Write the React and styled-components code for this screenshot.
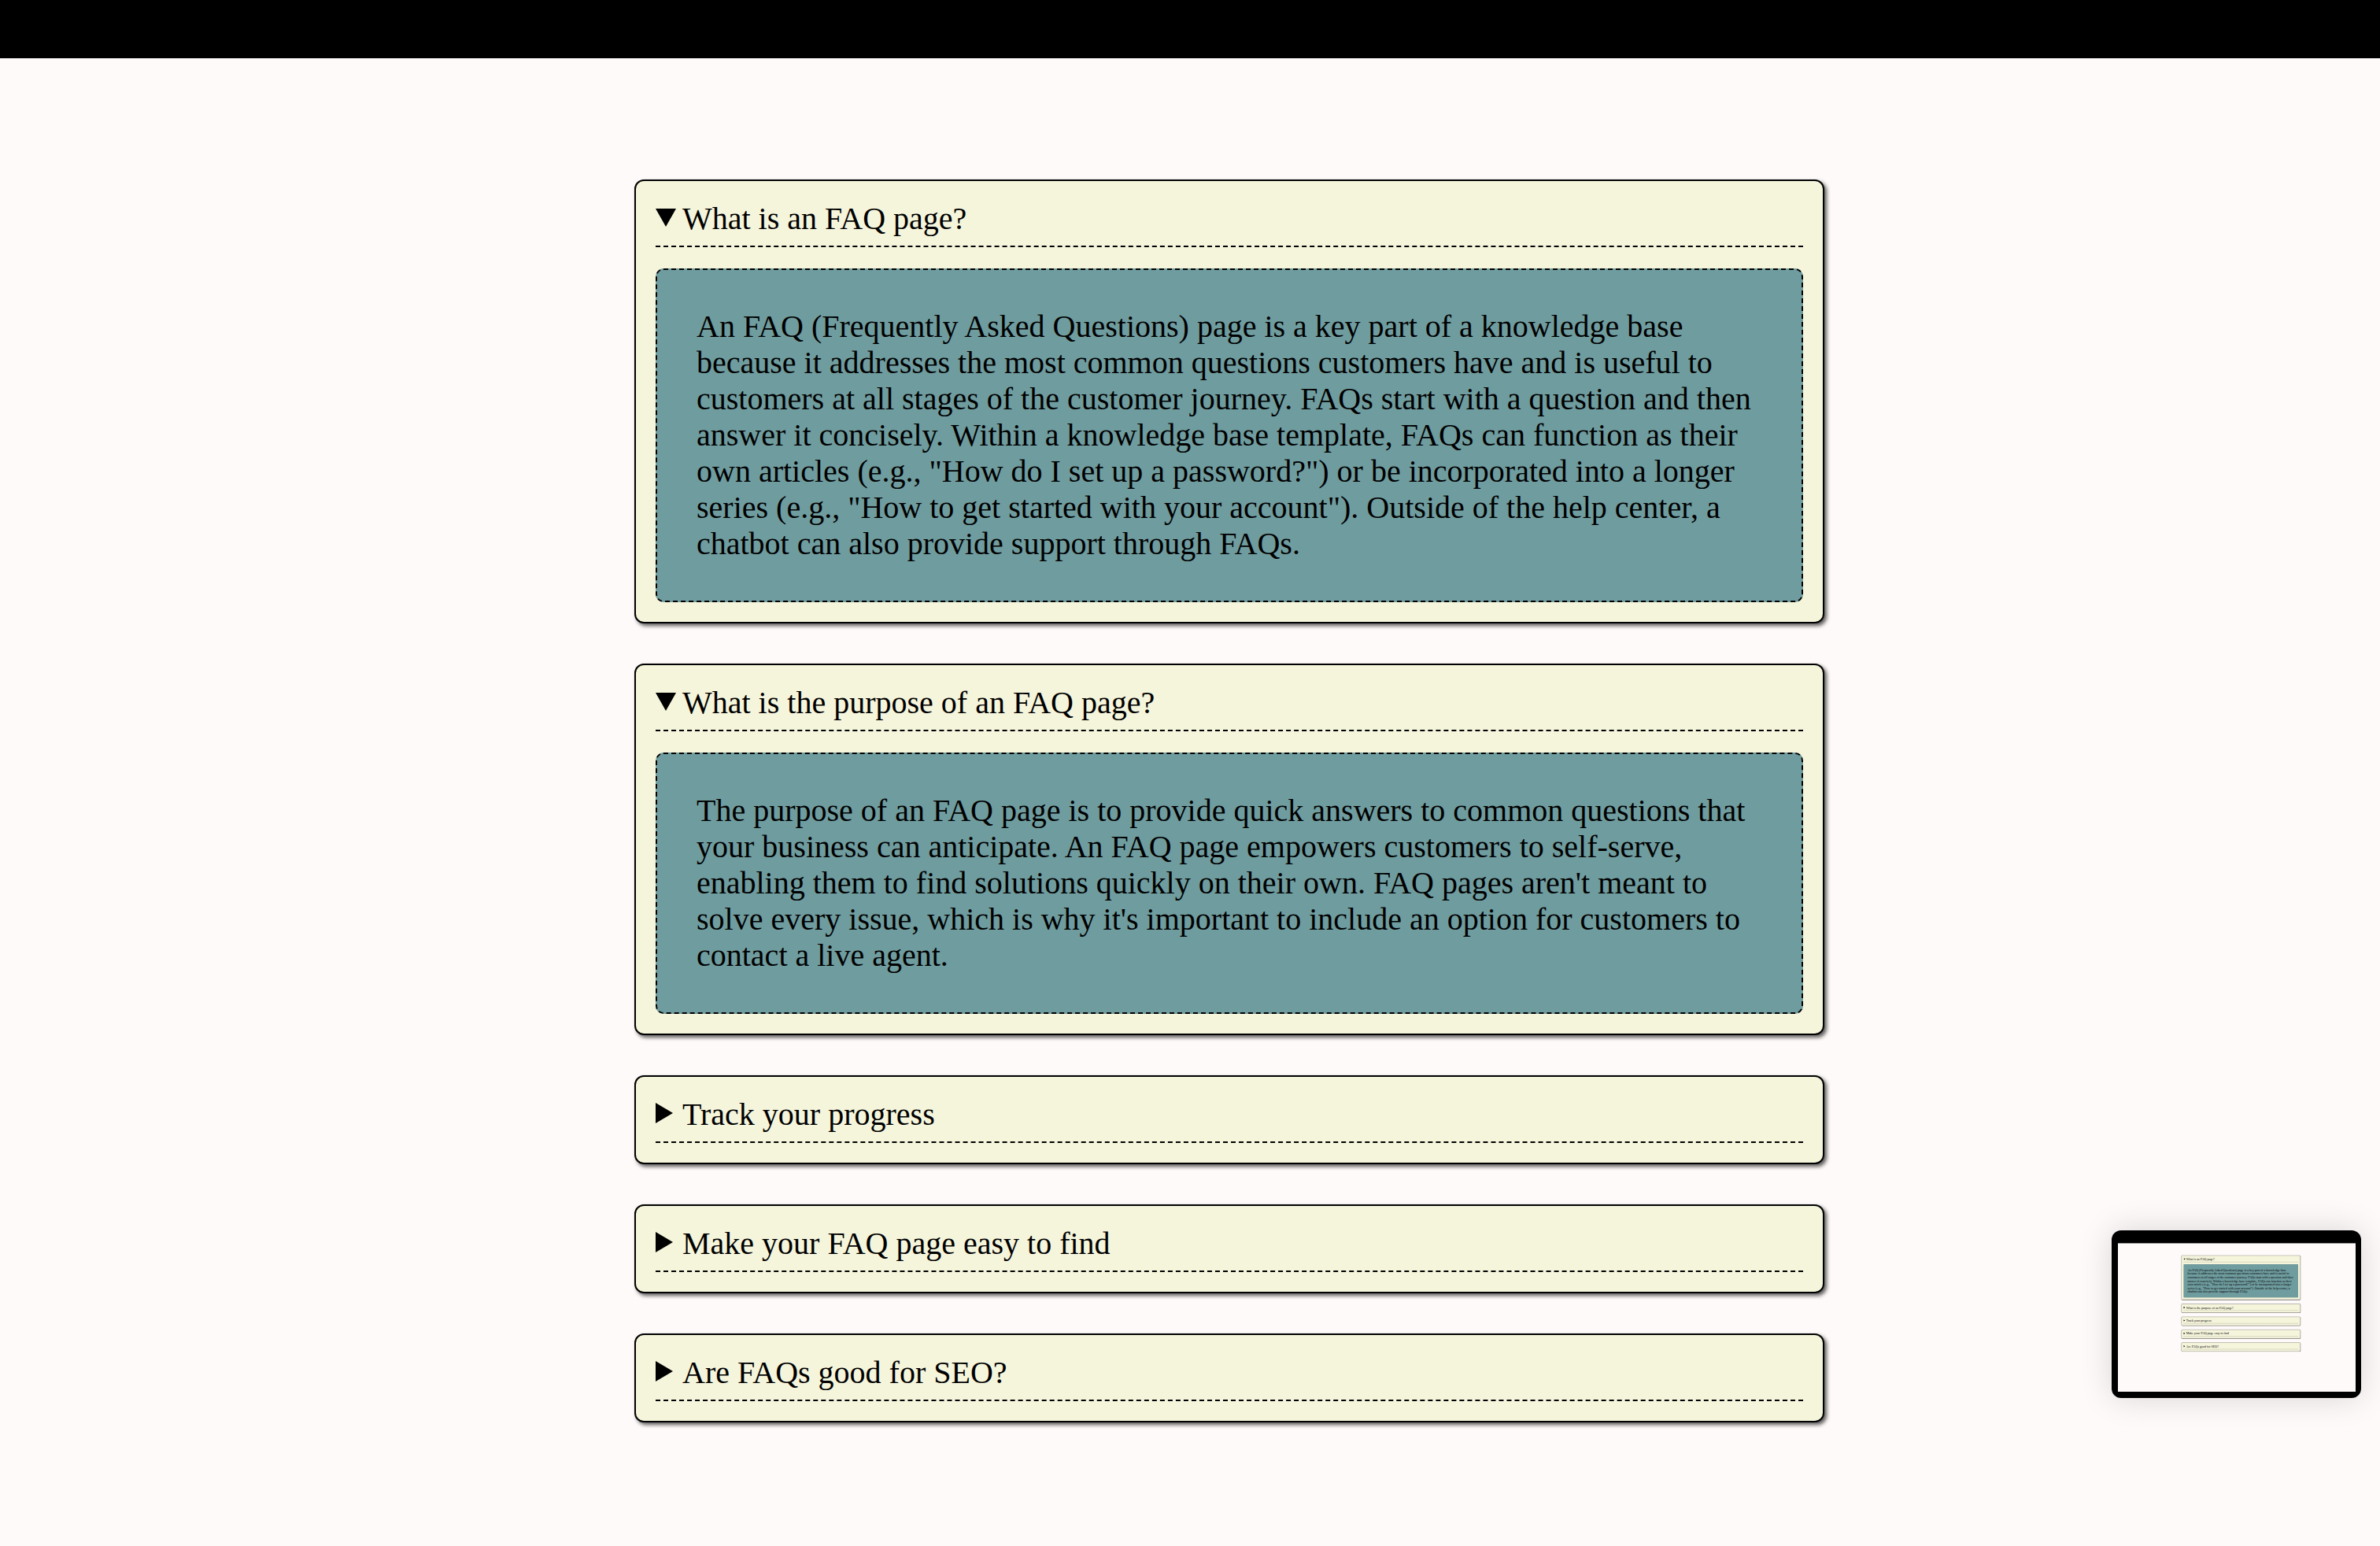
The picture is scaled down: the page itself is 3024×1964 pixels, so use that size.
import styled, { createGlobalStyle } from "styled-components";

const faqs = [
  {
    question: "What is an FAQ page?",
    answer:
      'An FAQ (Frequently Asked Questions) page is a key part of a knowledge base because it addresses the most common questions customers have and is useful to customers at all stages of the customer journey. FAQs start with a question and then answer it concisely. Within a knowledge base template, FAQs can function as their own articles (e.g., "How do I set up a password?") or be incorporated into a longer series (e.g., "How to get started with your account"). Outside of the help center, a chatbot can also provide support through FAQs.',
  },
  {
    question: "What is the purpose of an FAQ page?",
    answer:
      "The purpose of an FAQ page is to provide quick answers to common questions that your business can anticipate. An FAQ page empowers customers to self-serve, enabling them to find solutions quickly on their own. FAQ pages aren't meant to solve every issue, which is why it's important to include an option for customers to contact a live agent.",
  },
  { question: "Track your progress", answer: "" },
  { question: "Make your FAQ page easy to find", answer: "" },
  { question: "Are FAQs good for SEO?", answer: "" },
];

const GlobalStyle = createGlobalStyle`
  html, body {
    margin: 0;
    padding: 0;
    background: #fffafa;
  }
  body {
    font-family: "Liberation Serif", "Times New Roman", serif;
    color: #000;
  }
`;

// disclosure triangle, drawn like the browser's own marker
const Marker = ({ open }) =>
  open ? (
    <MarkerIcon $open width="26" height="23" viewBox="0 0 26 23">
      <polygon points="0,0 26,0 13,23" fill="#000" />
    </MarkerIcon>
  ) : (
    <MarkerIcon width="22" height="26" viewBox="0 0 22 26">
      <polygon points="0,0 22,13 0,26" fill="#000" />
    </MarkerIcon>
  );

const Page = ({ openItems }) => {
  return (
    <Screen>
      <TopBar />
      <Main>
        {faqs.map((faq, i) => {
          const open = openItems.includes(i);
          return (
            <Item key={faq.question} open={open}>
              <Question>
                <Marker open={open} />
                <span>{faq.question}</span>
              </Question>
              {faq.answer && (
                <Answer>
                  <p>{faq.answer}</p>
                </Answer>
              )}
            </Item>
          );
        })}
      </Main>
    </Screen>
  );
};

const App = () => {
  return (
    <>
      <GlobalStyle />
      <Page openItems={[0, 1]} />
      <Preview>
        <PreviewScreen>
          <PreviewScale>
            <Page openItems={[0]} />
          </PreviewScale>
        </PreviewScreen>
      </Preview>
    </>
  );
};

const Screen = styled.div`
  width: 3024px;
  min-height: 1964px;
  background: #fffafa;
  font-family: "Liberation Serif", "Times New Roman", serif;
`;

const TopBar = styled.div`
  height: 74px;
  background: #000;
`;

const Main = styled.main`
  display: flex;
  flex-direction: column;
  align-items: center;
  gap: 51px;
  padding: 154px 0 100px 100px;
`;

const Item = styled.details`
  box-sizing: border-box;
  width: 1512px;
  padding: 25px 25px 25px 25px;
  background: #f5f5dc;
  border: 2px solid #000;
  border-radius: 12px;
  box-shadow: 3px 3px 5px rgba(0, 0, 0, 0.65);
`;

const Question = styled.summary`
  display: flex;
  align-items: flex-start;
  list-style: none;
  font-size: 40px;
  line-height: 46px;
  padding-bottom: 11px;
  border-bottom: 2px dashed #000;
  cursor: pointer;
  &::-webkit-details-marker {
    display: none;
  }
`;

const MarkerIcon = styled.svg`
  flex: none;
  margin-top: ${(p) => (p.$open ? "10px" : "8px")};
  margin-right: ${(p) => (p.$open ? "8px" : "12px")};
`;

const Answer = styled.div`
  margin-top: 27px;
  padding: 49px 50px;
  background: #6f9c9f;
  border: 2px dashed #000;
  border-radius: 10px;
  p {
    margin: 0;
    font-size: 40px;
    line-height: 46px;
  }
`;

const Preview = styled.div`
  position: fixed;
  right: 24px;
  bottom: 188px;
  padding: 9px 7px 8px 8px;
  background: #000;
  border-radius: 12px;
  box-shadow: 0 0 40px rgba(0, 0, 0, 0.15);
`;

const PreviewScreen = styled.div`
  width: 302px;
  height: 196px;
  overflow: hidden;
  background: #fffafa;
`;

const PreviewScale = styled.div`
  width: 3024px;
  height: 1964px;
  transform: scale(0.1);
  transform-origin: 0 0;
`;

export default App;
